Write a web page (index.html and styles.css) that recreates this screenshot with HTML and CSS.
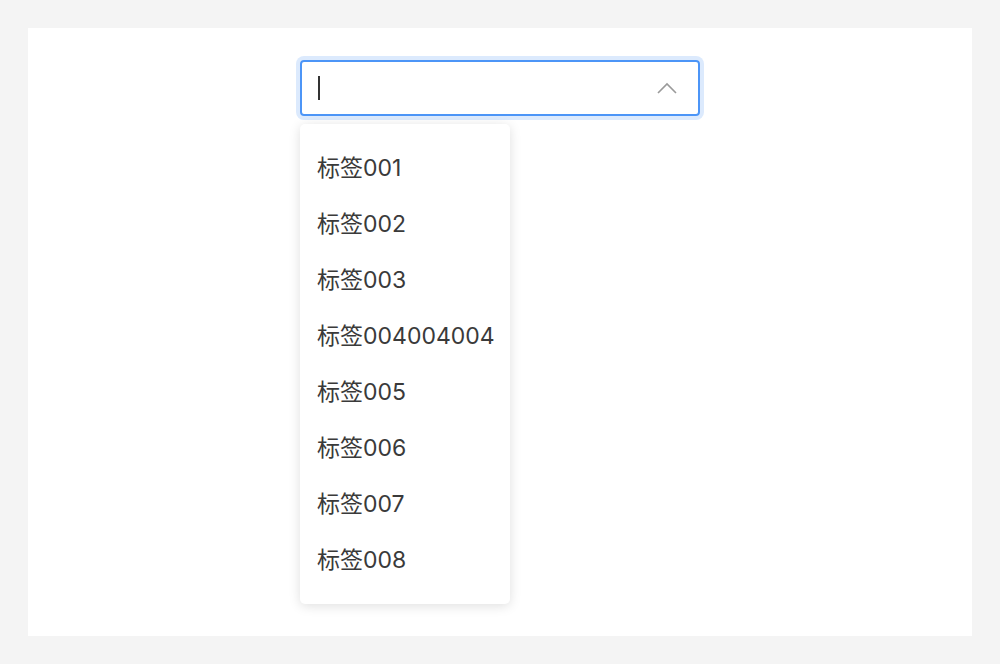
FILE: index.html
```html
<!DOCTYPE html>
<html lang="zh">
<head>
<meta charset="utf-8">
<link rel="stylesheet" href="styles.css">
</head>
<body>
<div class="panel">
  <div class="select-wrap">
    <div class="select">
      <span class="caret"></span>
      <svg class="arrow" width="20" height="12" viewBox="0 0 20 12"><polyline points="1,11 10,2 19,11" fill="none" stroke="#9a9a9a" stroke-width="1.6"/></svg>
    </div>
    <ul class="dropdown">
      <li>标签001</li>
      <li>标签002</li>
      <li>标签003</li>
      <li>标签004004004</li>
      <li>标签005</li>
      <li>标签006</li>
      <li>标签007</li>
      <li>标签008</li>
    </ul>
  </div>
</div>
</body>
</html>
```
FILE: styles.css
```css
html, body { margin: 0; padding: 0; }
body {
  background: #f4f4f4;
  padding: 28px;
  font-family: Inter, "Noto Sans CJK SC", sans-serif;
}
.panel {
  background: #fff;
  height: 608px;
  display: flex;
  justify-content: center;
  padding-top: 32px;
  box-sizing: border-box;
}
.select-wrap {
  width: 400px;
  position: relative;
}
.select {
  height: 56px;
  box-sizing: border-box;
  border: 2px solid #4c95f7;
  border-radius: 4px;
  box-shadow: 0 0 0 4px #dceafd;
  display: flex;
  align-items: center;
  justify-content: space-between;
  padding: 0 21px 0 16px;
}
.caret {
  display: block;
  width: 2px;
  height: 24px;
  background: #333;
}
.arrow { display: block; }
.dropdown {
  position: absolute;
  top: 64px;
  left: 0;
  width: 210px;
  margin: 0;
  padding: 16px 0;
  list-style: none;
  background: #fff;
  border-radius: 5px;
  box-shadow: 0 2px 12px rgba(0,0,0,0.13);
}
.dropdown li {
  height: 56px;
  line-height: 56px;
  padding-left: 17px;
  font-size: 23px;
  color: #3a3a3a;
  white-space: nowrap;
}
```
